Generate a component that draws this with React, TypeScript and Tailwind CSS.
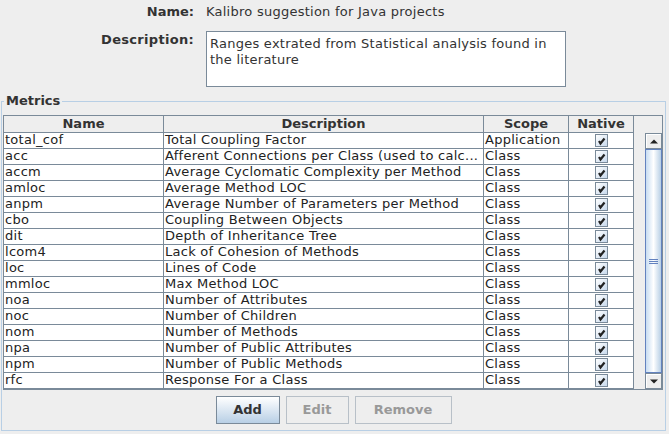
import React from 'react';

interface Metric {
  name: string;
  description: string;
  scope: string;
}

const metrics: Metric[] = [
  { name: 'total_cof', description: 'Total Coupling Factor', scope: 'Application' },
  { name: 'acc', description: 'Afferent Connections per Class (used to calc...', scope: 'Class' },
  { name: 'accm', description: 'Average Cyclomatic Complexity per Method', scope: 'Class' },
  { name: 'amloc', description: 'Average Method LOC', scope: 'Class' },
  { name: 'anpm', description: 'Average Number of Parameters per Method', scope: 'Class' },
  { name: 'cbo', description: 'Coupling Between Objects', scope: 'Class' },
  { name: 'dit', description: 'Depth of Inheritance Tree', scope: 'Class' },
  { name: 'lcom4', description: 'Lack of Cohesion of Methods', scope: 'Class' },
  { name: 'loc', description: 'Lines of Code', scope: 'Class' },
  { name: 'mmloc', description: 'Max Method LOC', scope: 'Class' },
  { name: 'noa', description: 'Number of Attributes', scope: 'Class' },
  { name: 'noc', description: 'Number of Children', scope: 'Class' },
  { name: 'nom', description: 'Number of Methods', scope: 'Class' },
  { name: 'npa', description: 'Number of Public Attributes', scope: 'Class' },
  { name: 'npm', description: 'Number of Public Methods', scope: 'Class' },
  { name: 'rfc', description: 'Response For a Class', scope: 'Class' },
];

function CheckBox() {
  return (
    <div className="w-[13px] h-[13px] border border-[#7a8a99] bg-gradient-to-br from-[#ffffff] to-[#c8d9ec] flex items-center justify-center">
      <svg width="11" height="11" viewBox="0 0 11 11">
        <path d="M3 6 L4.5 8.5 L8.5 3.5" stroke="#222" strokeWidth="2.2" fill="none" />
      </svg>
    </div>
  );
}

function ArrowButton({ up }: { up?: boolean }) {
  return (
    <div className="h-[16px] border border-[#7a8a99] bg-[#eeeeee] flex items-center justify-center shadow-[inset_1px_1px_0_#ffffff]">
      <svg width="8" height="5" viewBox="0 0 8 5">
        {up ? <path d="M0 4.5 L4 0.5 L8 4.5 Z" fill="#222" /> : <path d="M0 0.5 L4 4.5 L8 0.5 Z" fill="#222" />}
      </svg>
    </div>
  );
}

function ScrollBar() {
  return (
    <div className="w-[17px] flex flex-col bg-[#eeeeee]">
      <ArrowButton up />
      <div className="flex-1 border border-[#6382bf] bg-gradient-to-r from-[#c8ddf2] via-[#ffffff] to-[#b8cfe5] flex items-center justify-center">
        <div className="flex flex-col gap-[1px]">
          <div className="w-[9px] h-[1px] bg-[#6382bf]" />
          <div className="w-[9px] h-[1px] bg-[#6382bf]" />
          <div className="w-[9px] h-[1px] bg-[#6382bf]" />
        </div>
      </div>
      <ArrowButton />
    </div>
  );
}

export default function App() {
  return (
    <div className="w-[669px] h-[434px] overflow-hidden bg-[#eeeeee] font-['DejaVu_Sans',sans-serif] text-[13px] leading-[16px] text-[#333333]">
      <div className="pt-[4px]">
        <div className="grid grid-cols-[194px_1fr] gap-x-[12px]">
          <div className="text-right font-bold">Name:</div>
          <div className="tracking-[0.25px]">Kalibro suggestion for Java projects</div>
        </div>
        <div className="mt-[11px] grid grid-cols-[194px_360px] gap-x-[12px]">
          <div className="text-right font-bold pt-[1px] tracking-[0.3px]">Description:</div>
          <div className="h-[56px] border border-[#7a8a99] bg-white px-[3px] pt-[4px] tracking-[0.25px]">
            Ranges extrated from Statistical analysis found in the literature
          </div>
        </div>
      </div>

      <fieldset className="mt-[6px] ml-[1px] w-[665px] border border-[#b8cfe5] px-[1px] pt-[6px] pb-[6px]">
        <legend className="ml-[1px] px-[2px] font-bold">Metrics</legend>

        <div className="w-[660px] border border-[#7a8a99]">
          <div className="flex h-[17px]">
            <div className="w-[160px] border-r border-b border-[#7a8a99] text-center font-bold">Name</div>
            <div className="w-[320px] border-r border-b border-[#7a8a99] text-center font-bold">Description</div>
            <div className="w-[85px] border-r border-b border-[#7a8a99] text-center font-bold">Scope</div>
            <div className="w-[65px] border-r border-b border-[#7a8a99] text-center font-bold">Native</div>
            <div className="flex-1" />
          </div>

          <div className="flex h-[256px]">
            <div className="w-[630px] bg-white text-[#222222] tracking-[0.27px]">
              {metrics.map((m) => (
                <div key={m.name} className="flex h-[16px] leading-[14px]">
                  <div className="w-[160px] border-r border-b border-[#7a8a99] pl-[1px] whitespace-nowrap overflow-hidden">{m.name}</div>
                  <div className="w-[320px] border-r border-b border-[#7a8a99] pl-[1px] whitespace-nowrap overflow-hidden">{m.description}</div>
                  <div className="w-[85px] border-r border-b border-[#7a8a99] pl-[1px] whitespace-nowrap overflow-hidden">{m.scope}</div>
                  <div className="w-[65px] border-r border-b border-[#7a8a99] flex items-center justify-center">
                    <CheckBox />
                  </div>
                </div>
              ))}
            </div>
            <div className="flex-1" />
            <ScrollBar />
          </div>
        </div>

        <div className="mt-[6px] flex justify-center gap-[6px]">
          <button className="w-[64px] h-[28px] border border-[#7a8a99] bg-gradient-to-b from-[#ffffff] to-[#b8cfe5] font-bold text-[#333333]">
            Add
          </button>
          <button className="w-[63px] h-[28px] border border-[#b8c0c8] bg-[#eeeeee] font-bold text-[#999999]" disabled>
            Edit
          </button>
          <button className="w-[97px] h-[28px] border border-[#b8c0c8] bg-[#eeeeee] font-bold text-[#999999]" disabled>
            Remove
          </button>
        </div>
      </fieldset>
    </div>
  );
}
